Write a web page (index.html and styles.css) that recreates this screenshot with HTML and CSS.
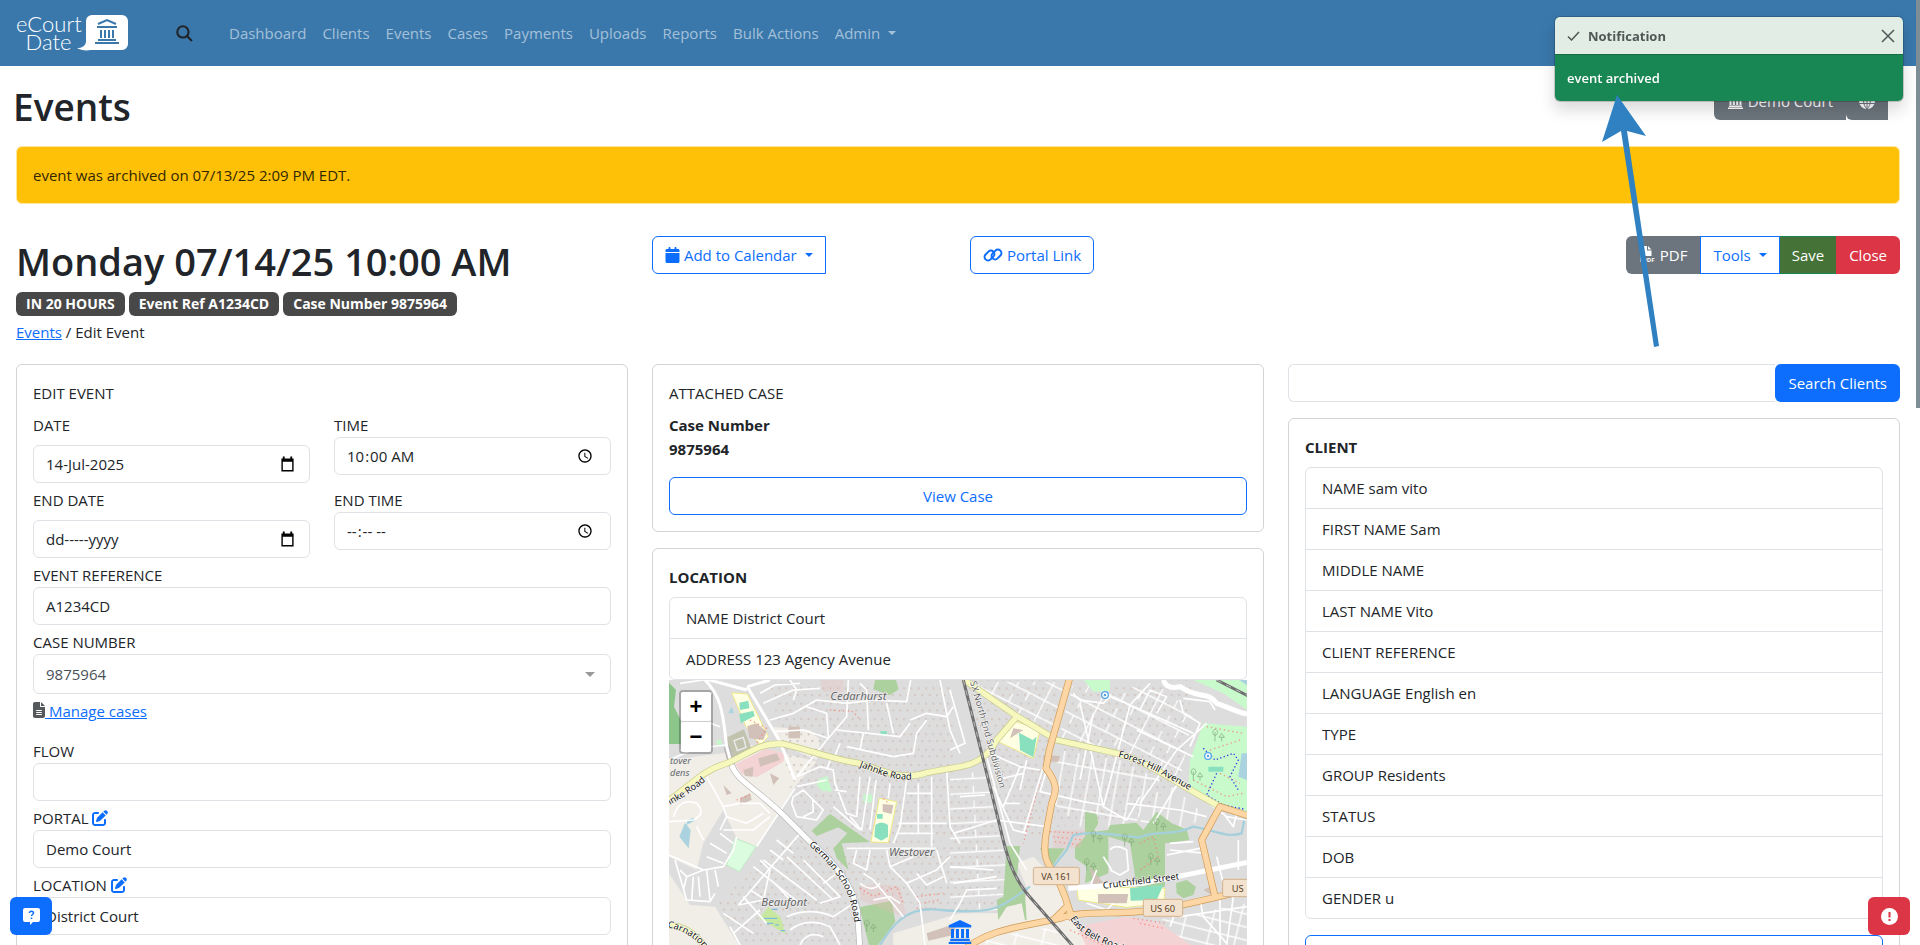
FILE: index.html
```html
<!DOCTYPE html>
<html lang="en">
<head>
  <meta charset="UTF-8">
  <title>Events - eCourtDate</title>
  <meta name="viewport" content="width=device-width, initial-scale=1.0">
  <link rel="stylesheet" href="styles.css">
</head>
<body>
  <!-- shared icons -->
  <svg class="defs" aria-hidden="true">
    <symbol id="i-court" viewBox="0 0 16 16"><path d="M8 0 15.500 3.500V5H.5V3.500zM2 6h2v6H2zm3.300 0h2v6h-2zm3.400 0h2v6h-2zM12 6h2v6h-2zM1.500 12.500h13V14h-13zM.5 14.500h15V16H.5z"/></symbol>
    <symbol id="i-edit" viewBox="0 0 512 512"><path d="M471.600 21.700c-21.900-21.900-57.300-21.900-79.200 0L362.300 51.700l97.900 97.900 30.100-30.100c21.900-21.900 21.900-57.300 0-79.200L471.600 21.700zm-299.200 220c-6.100 6.100-10.800 13.600-13.500 21.900l-29.600 88.800c-2.900 8.600-.6 18.100 5.800 24.600s15.900 8.700 24.600 5.800l88.800-29.600c8.200-2.700 15.700-7.400 21.900-13.500L437.700 172.300 339.700 74.300 172.400 241.700zM96 64C43 64 0 107 0 160V416c0 53 43 96 96 96H352c53 0 96-43 96-96V320c0-17.700-14.300-32-32-32s-32 14.300-32 32v96c0 17.700-14.300 32-32 32H96c-17.700 0-32-14.300-32-32V160c0-17.700 14.300-32 32-32h96c17.700 0 32-14.300 32-32s-14.300-32-32-32H96z"/></symbol>
    <symbol id="i-calendar" viewBox="0 0 448 512"><path d="M96 32V64H48C21.500 64 0 85.500 0 112v48H448V112c0-26.500-21.500-48-48-48H352V32c0-17.700-14.300-32-32-32s-32 14.300-32 32V64H160V32c0-17.700-14.300-32-32-32S96 14.300 96 32zM448 192H0V464c0 26.500 21.500 48 48 48H400c26.500 0 48-21.500 48-48V192z"/></symbol>
    <symbol id="i-picker" viewBox="0 0 16 16"><path d="M3 0h2v2h6V0h2v2h1.500v14h-13V2H3zM3 5.500v9h10v-9z" fill-rule="evenodd"/></symbol>
    <symbol id="i-file" viewBox="0 0 384 512"><path fill-rule="evenodd" d="M64 0C28.700 0 0 28.700 0 64V448c0 35.300 28.700 64 64 64H320c35.300 0 64-28.700 64-64V160H256c-17.700 0-32-14.300-32-32V0H64zM256 0V128H384L256 0zM112 256H272c8.800 0 16 7.200 16 16s-7.200 16-16 16H112c-8.800 0-16-7.200-16-16s7.200-16 16-16zm0 64H272c8.800 0 16 7.200 16 16s-7.200 16-16 16H112c-8.800 0-16-7.200-16-16s7.200-16 16-16zm0 64H272c8.800 0 16 7.200 16 16s-7.200 16-16 16H112c-8.800 0-16-7.200-16-16s7.200-16 16-16z"/></symbol>
  </svg>

  <div class="page">
    <nav class="navbar">
      <a class="brand" href="#">
        <span class="brand-name">eCourt<br>Date</span>
        <svg class="brand-mark" viewBox="0 0 51 36" aria-hidden="true">
          <path fill="#fff" d="M15 0H45a6 6 0 0 1 6 6V29a6 6 0 0 1-6 6H14C9 36 3 35 0 33c5 0 8-2 9-6V6a6 6 0 0 1 6-6z"/>
          <path fill="none" stroke="#3a78ac" stroke-width="2" d="M21 9 30 5l9 4M20 12h20M24 15v8M28 15v8M32 15v8M36 15v8M21 25h18M18 28h24"/>
        </svg>
      </a>
      <button class="nav-search" aria-label="Search">
        <svg viewBox="0 0 16 16" width="17" height="17"><circle cx="6.500" cy="6.500" r="5.300"/><path d="M10.500 10.500 15 15"/></svg>
      </button>
      <ul class="nav-links">
        <li><a href="#">Dashboard</a></li>
        <li><a href="#">Clients</a></li>
        <li><a href="#">Events</a></li>
        <li><a href="#">Cases</a></li>
        <li><a href="#">Payments</a></li>
        <li><a href="#">Uploads</a></li>
        <li><a href="#">Reports</a></li>
        <li><a href="#">Bulk Actions</a></li>
        <li><a class="caret" href="#">Admin</a></li>
      </ul>
    </nav>

    <header class="page-header">
      <h1>Events</h1>
      <div class="btn-group">
        <button class="btn btn-secondary"><svg class="icon" width="17" height="16"><use href="#i-court"/></svg> Demo Court</button>
        <button class="btn btn-secondary btn-globe" aria-label="Language">
          <svg width="16" height="16" viewBox="0 0 16 16"><circle cx="8" cy="8" r="8" fill="#fff"/><path d="M0 5.500h16M0 10.500h16M8 0v16M8 0C3.500 4 3.500 12 8 16M8 0c4.500 4 4.500 12 0 16" fill="none" stroke="#6c757d"/></svg>
        </button>
      </div>
    </header>

    <main class="content">
      <div class="alert">event was archived on 07/13/25 2:09 PM EDT.</div>

      <section class="columns title-row">
        <div>
          <h2>Monday 07/14/25 10:00 AM</h2>
          <div class="badges">
            <span class="badge">IN 20 HOURS</span>
            <span class="badge">Event Ref A1234CD</span>
            <span class="badge">Case Number 9875964</span>
          </div>
          <div class="breadcrumb"><a href="#">Events</a> / Edit Event</div>
        </div>
        <div class="links">
          <div><button class="btn btn-outline btn-open caret"><svg class="icon" width="15" height="16"><use href="#i-calendar"/></svg> Add to Calendar</button></div>
          <div><button class="btn btn-outline"><svg class="icon" width="20" height="16" viewBox="0 0 20 16"><g fill="none" stroke="#0d6efd" stroke-width="2"><rect x="1" y="5" width="11" height="7" rx="3.500" transform="rotate(-45 6.500 8.500)"/><rect x="8" y="4" width="11" height="7" rx="3.500" transform="rotate(-45 13.500 7.500)"/></g></svg> Portal Link</button></div>
        </div>
        <div class="btn-group actions">
          <button class="btn btn-secondary">
            <svg class="icon" width="17" height="17" viewBox="0 0 17 17"><path fill="#fff" d="M1.500 0H8v4.500h4.500V10h-9v6H1.500zM9 0l3.500 3.500H9z"/><text class="pdf-tag" x="4" y="16">PDF</text></svg>
            PDF</button>
          <button class="btn btn-outline caret">Tools</button>
          <button class="btn btn-save">Save</button>
          <button class="btn btn-danger">Close</button>
        </div>
      </section>

      <section class="columns">
        <form class="card">
          <p class="card-title">EDIT EVENT</p>
          <div class="pair">
            <div class="field field-date">
              <label for="date">DATE</label>
              <div class="picker">
                <input id="date" type="text" value="14-Jul-2025">
                <svg width="15" height="16"><use href="#i-picker"/></svg>
              </div>
            </div>
            <div class="field">
              <label for="time">TIME</label>
              <input id="time" type="time" value="10:00">
            </div>
            <div class="field field-date">
              <label for="end-date">END DATE</label>
              <div class="picker">
                <input id="end-date" type="text" value="dd-----yyyy">
                <svg width="15" height="16"><use href="#i-picker"/></svg>
              </div>
            </div>
            <div class="field">
              <label for="end-time">END TIME</label>
              <input id="end-time" type="time">
            </div>
          </div>
          <div class="field">
            <label for="reference">EVENT REFERENCE</label>
            <input id="reference" type="text" value="A1234CD">
          </div>
          <div class="field">
            <label for="case">CASE NUMBER</label>
            <div class="picker select">
              <select id="case"><option>9875964</option></select>
            </div>
          </div>
          <a class="manage" href="#"><svg width="12" height="16"><use href="#i-file"/></svg> Manage cases</a>
          <div class="field">
            <label for="flow">FLOW</label>
            <input id="flow" type="text">
          </div>
          <div class="field">
            <label for="portal">PORTAL <svg class="edit" width="16" height="16"><use href="#i-edit"/></svg></label>
            <input id="portal" type="text" value="Demo Court">
          </div>
          <div class="field">
            <label for="location">LOCATION <svg class="edit" width="16" height="16"><use href="#i-edit"/></svg></label>
            <input id="location" type="text" value="District Court">
          </div>
        </form>

        <div class="stack">
          <div class="card">
            <p class="card-title">ATTACHED CASE</p>
            <p class="case-number">Case Number<br>9875964</p>
            <button class="btn btn-outline btn-block">View Case</button>
          </div>
          <div class="card">
            <p class="card-title strong">LOCATION</p>
            <ul class="list">
              <li>NAME District Court</li>
              <li>ADDRESS 123 Agency Avenue</li>
            </ul>
            <div class="map">
              <div class="map-zoom">
                <button aria-label="Zoom in">+</button>
                <button aria-label="Zoom out">−</button>
              </div>
              <svg class="map-canvas" viewBox="27 30 1734 1200" preserveAspectRatio="xMinYMin slice">
                <defs>
                  <pattern id="houses" width="22" height="46" patternUnits="userSpaceOnUse"><path d="M3 6h6v6H3zM14 26h6v6h-6z" fill="#d2c8c1"/></pattern>
                  <pattern id="grid-ne" width="150" height="52" patternUnits="userSpaceOnUse" patternTransform="rotate(27)"><path d="M0 26H150M20 0V52M75 0V26M118 26V52" class="lane"/></pattern>
                  <pattern id="grid-mid" width="42" height="130" patternUnits="userSpaceOnUse" patternTransform="rotate(10)"><path d="M21 0V130M0 65H42" class="lane"/></pattern>
                  <pattern id="grid-w" width="220" height="44" patternUnits="userSpaceOnUse" patternTransform="rotate(-3)"><path d="M0 22H220M40 0V22" class="lane"/></pattern>
                  <pattern id="grid-s" width="80" height="38" patternUnits="userSpaceOnUse" patternTransform="rotate(14)"><path d="M0 19H80M30 0V38" class="lane"/></pattern>
                  <path id="p-jahnke" d="M598 290C650 308 700 338 775 326"/>
                  <path id="p-jahnke2" d="M0 420C60 390 100 365 150 322"/>
                  <path id="p-german" d="M446 526C520 590 566 650 580 735L588 790"/>
                  <path id="p-forest" d="M1374 260C1480 290 1520 325 1620 378"/>
                  <path id="p-rail" d="M930 36 1040 430"/>
                  <path id="p-belt" d="M1230 745C1260 800 1320 815 1400 850"/>
                  <path id="p-carn" d="M22 772C70 780 120 812 140 850"/>
                </defs>

                <!-- land use -->
                <rect x="27" y="30" width="1734" height="1200" fill="#dedddd"/>
                <path fill="#f1eee8" d="M27 270 190 250 270 225 470 275 405 350 290 530 230 505 190 420 130 520 110 600 27 560zM330 170 450 180 480 210 470 270 380 230zM27 610 90 705 165 710 240 830H27zM700 790 900 730 1010 730 1130 660 1180 600 1240 750 1330 820 1330 1230H690zM1070 580 1120 560 1190 630 1230 700 1120 700z"/>
                <path fill="url(#houses)" d="M330 40H880V500L700 560 560 480 400 400zM440 520 880 530V720L760 700 600 690zM170 700 430 460 600 700 600 830H260zM900 30H1200L1140 520 1020 420zM1240 40 1600 30 1560 330 1400 460 1180 470zM880 300 1010 420 1040 740 880 720z"/>
                <path fill="url(#grid-ne)" d="M930 36H1225L1190 180 1060 130zM1270 130 1240 40 1540 60 1600 130 1560 330 1380 250 1195 205 1240 40z"/>
                <path fill="url(#grid-mid)" d="M1195 240 1380 270 1500 330 1420 470 1260 470 1180 400zM1450 380 1540 350 1640 440 1560 480 1440 470z"/>
                <path fill="url(#grid-w)" d="M870 320 975 300 1020 500 1050 620 1010 740 870 700z"/>
                <path fill="url(#grid-s)" d="M1500 750 1761 700V1230H1540zM940 810 1180 770 1230 840V1230H900z"/>
                <path fill="#8cc68b" d="M27 38 48 60 42 110 62 150V222H27z"/>
                <path fill="#add19e" d="M645 30H708L716 58 690 76 640 58zM510 432 630 516 545 520 566 600 530 565 520 535 562 490 535 472 470 498 455 482zM598 712 695 692 706 755 650 830H628zM1275 425 1310 432 1315 460 1300 485 1345 480 1350 465 1430 458 1450 480 1490 425 1535 460 1580 478 1588 510 1515 520V650H1430L1410 520 1345 500V610L1275 640 1280 590 1245 565V530L1275 500zM1040 528H1080L1070 630 1095 670 1100 750H1095L1085 700 1040 710 1015 750 1010 690 1030 680zM1140 535H1215L1175 590zM1548 640 1580 630 1608 650 1600 675 1570 685 1550 670z"/>
                <path fill="#c8facc" d="M1272 30H1350V62L1300 65zM1600 30H1761V120L1690 70zM1630 160 1761 170V430L1680 410 1585 350 1590 270z"/>
                <path fill="#dcfce0" stroke="#bfeec4" stroke-width="3" d="M225 505 288 530 238 605 200 585z"/>
                <path fill="#c6f7cb" d="M475 328 502 318 516 365 485 362 470 345zM610 373H637V398H610zM168 212 182 208 187 224 172 226z"/>
                <path fill="#c8e8a0" d="M325 710 362 742 376 792 298 745z"/>
                <path fill="#ffffe4" stroke="#efe98a" stroke-width="3" d="M215 68 262 72 325 200 300 225 258 170zM658 385 710 395 685 518 633 516zM1055 150 1140 180 1120 265 1015 215zM1250 650 1515 655 1512 700 1400 712 1255 690z"/>
                <path fill="#88e0be" d="M238 98 265 92 268 115 240 120zM238 132 280 122 284 138 242 160zM660 184H682L680 196H664zM646 465Q665 450 684 465V500L664 512 643 500zM651 432H668V446H651zM1077 188 1118 210 1130 200 1120 262 1080 240zM1410 655 1450 650 1510 645 1490 690 1412 692zM1645 290H1690V305H1645z"/>
                <path fill="#c1c3ae" d="M195 205 252 178 276 240 215 262z"/>
                <path fill="none" stroke="#eee" stroke-width="4" d="M222 212 250 202 258 232 232 242z"/>
                <path fill="#f3d3d3" d="M225 283 318 236 375 250 370 275 290 322 245 312zM1250 770 1400 740 1500 760 1600 830H1280z"/>
                <path fill="#f0b8b8" opacity=".25" d="M1180 480H1280L1260 535H1180zM480 30H550V65H490zM600 650 650 640 720 650 740 740 700 730 600 690z"/>
                <path fill="#d2c1b8" d="M262 168 290 160 320 185 310 210 268 205zM295 265 350 250 360 270 300 290zM250 300 280 290 278 320 255 318zM330 310 358 325 340 345zM190 345 215 370 200 375zM240 385 270 370 275 390 240 405zM668 402 700 405 695 432 668 425zM1060 175 1090 180 1050 205zM1150 255 1200 258 1195 275H1150zM1314 672H1405L1400 700H1314zM1290 590 1330 640 1300 645zM1630 660 1650 650 1655 675zM385 170H420V205H385zM800 790 890 760 880 795 805 812z"/>
                <path fill="#aad3df" d="M75 458 92 480 86 535 58 500zM82 450 102 443 104 452 80 465zM205 130 215 110 222 130zM1745 250H1761V330L1735 320zM1738 30H1761V46z"/>
                <g fill="none" stroke="#fa8072" stroke-width="4" stroke-dasharray="4 9" opacity=".8">
                  <path d="M510 120 580 125 600 150M270 150 320 175 290 220M230 390 270 375M670 385 685 400M600 655 640 680 710 650 730 700M770 680 850 670M780 700 840 690M770 715 830 715M1170 485 1270 490M1180 500 1270 510M1185 515 1260 525M1140 330 1090 520M1440 520 1480 500 1495 560 1440 600M1640 170 1750 190M1650 240 1740 210M1600 330 1700 380 1750 370M1680 310 1740 340M1420 745 1520 760M1440 760 1510 775M1230 780 1330 825"/>
                </g>
                <path fill="none" stroke="#3b3be0" stroke-width="4" stroke-dasharray="4 7" d="M1630 235 1665 270 1720 250 1735 270 1710 320 1735 360M1670 310 1640 375 1690 405 1755 418"/>

                <!-- water -->
                <g fill="none" stroke="#a6cfdc" stroke-width="7">
                  <path d="M660 825C700 760 740 715 820 718 860 720 890 728 960 722 1010 720 1040 700 1110 650M1180 590 1220 540 1240 495C1310 480 1380 500 1440 502 1480 480 1540 500 1600 470 1660 480 1700 505 1745 490L1755 440"/>
                  <path stroke="#6db3e6" stroke-width="3" d="M335 718h18M312 745h40M318 760h22M345 765h12M362 782h14"/>
                </g>

                <!-- side streets -->
                <g class="street">
                  <path d="M60 40 130 30M130 110 160 60M100 140 180 170M27 270 120 230M60 240 200 225M300 70 345 45 420 40M310 100 400 60 480 55M330 150 400 130 470 90 560 100 640 90 740 95 752 30M340 185 430 180 505 205 560 140 565 30M505 205 410 320M390 30 410 60 400 90M440 110 500 130 505 200M530 180 720 200 750 160M600 40 620 60 625 180M680 100 700 190M750 150 800 130 860 140 880 110M840 30 870 180 900 250M560 230 700 260 760 250 770 190 800 150M540 220 520 270M610 190 600 240"/>
                  <path d="M410 320 480 290 520 300 525 340 560 430 590 440 600 320M410 350 500 330M405 355 290 530M400 380 430 360 490 420 470 450 410 440 395 400zM430 440 460 425 458 390M525 360 560 365M630 320 605 480 570 440M648 330 630 480M600 480 520 410M690 340 685 385M740 330 720 470 700 520M775 340V490M815 320V530M740 370H815M715 460H860M715 490H820M860 300 870 470 900 520"/>
                  <path d="M500 300 515 260M560 535H830M590 540 580 580 620 600 630 540M680 540 690 590 760 560M690 590 740 640 780 700 795 825M740 640 830 600 870 560M770 610 800 645 850 620M830 540 860 640M610 610 640 630 690 690 730 740M600 640Q640 670 660 640M640 690 690 680 720 700M870 750 900 700"/>
                  <path d="M40 440Q60 380 110 400 140 430 100 450L27 455M110 470 130 510M27 555 130 600 190 590 220 540 230 500M190 410 240 400 300 400 330 430M190 410 200 440 180 480M200 440 260 460 310 430M140 320 190 410M190 480 280 480 330 440"/>
                  <path d="M130 600 80 620 60 600M80 620 70 660M100 620 95 690M115 620 120 680M45 570 80 690 150 695 165 670M140 600 150 690M165 600 175 650M150 520 200 550M140 560 190 580M180 490 220 520"/>
                  <path d="M235 705 420 490M235 705 310 690 330 600 300 570M330 540 370 570M350 510 400 550M280 590 420 700M310 570 470 690M380 560 520 690M430 570 540 680 480 700M270 660 350 710M250 680 320 760M190 730 280 790M210 770 240 825M220 790 300 720M380 740Q450 710 520 740L580 700M390 780Q440 740 510 770L540 825M420 825Q440 780 490 800M345 640 400 700M490 640 530 610"/>
                  <path d="M870 60 915 220 870 240M900 380 975 375M980 260 1050 520 1100 600M990 250 1080 290 1140 300M1080 290 1030 410M1000 350 1060 480 1100 490M1030 400 1080 400M1150 290 1090 490M1100 270 1080 360M1010 330 1090 310M1160 300 1140 365 1270 395 1330 405M880 490 1010 450 1160 470"/>
                  <path d="M1240 70 1260 90 1330 100 1350 80 1410 105 1600 190M1300 130 1260 330M1410 105 1330 410 1400 450 1440 380M1260 100 1330 410M1560 90 1570 130 1620 160 1590 230M1570 85 1650 95 1665 120M1410 105 1470 40M1440 120 1470 60 1520 80 1490 130M1430 180 1600 260M1440 400 1550 240 1640 160M1480 460 1560 330M1400 400 1560 420 1640 440M1620 380 1700 440 1760 450M1690 430 1720 470 1730 430M1520 555 1620 535M1530 540 1640 550M1530 520 1600 515M1735 510V600"/>
                  <path d="M1350 540Q1365 520 1400 540L1405 600 1380 615 1350 600M1355 600 1330 560M1290 650 1310 600M1670 560 1690 640M1530 770 1545 730M1620 690 1630 740 1700 820M1680 690V825M1720 680 1700 825M900 700 920 660 1010 655M880 640 1010 620M870 590 1000 600M1560 740 1761 710M1280 700 1340 720 1360 700"/>
                </g>
                <path class="casing" d="M200 230 215 285C230 330 280 350 370 435L450 515C540 590 580 660 592 720L600 840"/>
                <path class="avenue" d="M130 25C190 80 190 150 200 230L215 285M262 50 360 215 405 330M262 50 330 30M130 25 260 60"/>
                <path class="avenue wide" d="M215 285C230 330 280 350 370 435L450 515C540 590 580 660 592 720L600 840"/>
                <path class="avenue wide" d="M1225 655 1450 640 1600 610 1761 577M1510 30Q1520 60 1560 50C1620 90 1640 60 1670 100 1700 110 1740 130 1761 132"/>

                <!-- main roads -->
                <g class="road-yellow">
                  <path id="yellow" d="M15 400C100 340 130 300 200 280 260 255 300 215 370 222 450 240 520 270 600 280 680 310 740 330 800 308L900 290C960 280 990 250 1010 210L1070 140M15 765C70 765 110 790 140 840M910 28 1070 138 1190 210 1370 250C1480 280 1520 325 1690 415"/>
                </g>
                <use href="#yellow" class="fill-yellow"/>
                <g class="road-orange">
                  <path id="orange" d="M1230 20 1168 240 1158 295C1200 350 1185 370 1175 400L1160 480C1145 560 1160 580 1190 620L1215 680 1238 750M900 850C980 775 1090 770 1200 745 1270 720 1350 735 1470 722 1570 708 1630 690 1780 655M1665 680 1625 510 1680 410 1780 442M1180 750 1225 705"/>
                </g>
                <use href="#orange" class="fill-orange"/>
                <path fill="none" stroke="#6f6f6f" stroke-width="9" d="M910 30 1020 470C1040 560 1060 620 1100 670L1240 830M1670 30 1765 78"/>
                <path fill="none" stroke="#bbb" stroke-width="3" stroke-dasharray="16 16" d="M910 30 1020 470C1040 560 1060 620 1100 670L1240 830M1670 30 1765 78"/>
                <g fill="#fff" stroke="#58a6e8" stroke-width="4"><circle cx="1335" cy="75" r="10"/><circle cx="1644" cy="258" r="10"/></g>
                <g fill="#58a6e8"><circle cx="1335" cy="75" r="4"/><circle cx="1644" cy="258" r="4"/></g>
                <g fill="none" stroke="#80a878" stroke-width="2">
                  <path id="tree" d="M1300 500a7 9 0 1 1 1 0zM1300 490v28M1312 506l8-12 8 12zM1320 506v12"/>
                  <use href="#tree" x="190" y="-36"/><use href="#tree" x="94" y="10"/><use href="#tree" x="172" y="68"/><use href="#tree" x="-20" y="84"/><use href="#tree" x="365" y="-304"/><use href="#tree" x="300" y="-186"/><use href="#tree" x="-680" y="268"/>
                </g>

                <!-- labels -->
                <g class="map-road">
                  <text><textPath href="#p-jahnke">Jahnke Road</textPath></text>
                  <text><textPath href="#p-jahnke2">Jahnke Road</textPath></text>
                  <text><textPath href="#p-german">German School Road</textPath></text>
                  <text><textPath href="#p-forest">Forest Hill Avenue</textPath></text>
                  <text><textPath href="#p-belt">East Belt Road</textPath></text>
                  <text><textPath href="#p-carn">Carnation</textPath></text>
                  <text transform="translate(1330 656) rotate(-7)">Crutchfield Street</text>
                </g>
                <text class="map-rail"><textPath href="#p-rail">SX North End Subdivision</textPath></text>
                <g class="map-place">
                  <text x="511" y="90">Cedarhurst</text>
                  <text x="687" y="557">Westover</text>
                  <text x="304" y="708">Beaufont</text>
                  <text class="small" x="30" y="281">tover</text>
                  <text class="small" x="30" y="317">dens</text>
                </g>
                <g class="shield">
                  <rect x="1120" y="592" width="138" height="52" rx="6"/><text x="1188" y="629">VA 161</text>
                  <rect x="1450" y="688" width="118" height="51" rx="6"/><text x="1508" y="725">US 60</text>
                  <rect x="1688" y="628" width="118" height="52" rx="6"/><text x="1733" y="665">US</text>
                </g>
                <use href="#i-court" x="864" y="750" width="72" height="72" fill="#0d6efd"/>
              </svg>
            </div>
          </div>
        </div>

        <div class="stack">
          <div class="search">
            <input type="text" aria-label="Search Clients">
            <button class="btn btn-primary">Search Clients</button>
          </div>
          <div class="card">
            <p class="card-title strong">CLIENT</p>
            <ul class="list">
              <li>NAME sam vito</li>
              <li>FIRST NAME Sam</li>
              <li>MIDDLE NAME</li>
              <li>LAST NAME Vito</li>
              <li>CLIENT REFERENCE</li>
              <li>LANGUAGE English en</li>
              <li>TYPE</li>
              <li>GROUP Residents</li>
              <li>STATUS</li>
              <li>DOB</li>
              <li>GENDER u</li>
            </ul>
            <button class="btn btn-outline btn-block view-client">View Client</button>
          </div>
        </div>
      </section>
    </main>
  </div>
  <div class="scroll-thumb"></div>

  <button class="corner corner-left" aria-label="Help">
    <svg width="17" height="17" viewBox="0 0 17 17"><path fill="#fff" d="M2 0h13a2 2 0 0 1 2 2v10a2 2 0 0 1-2 2h-5l-3 3v-3H2a2 2 0 0 1-2-2V2a2 2 0 0 1 2-2z"/><path fill="none" stroke="#0d6efd" stroke-width="1.500" d="M6.500 5c0-2.500 4-2.500 4 0 0 1.500-2 1.500-2 3M8.500 9.500V11"/></svg>
  </button>
  <button class="corner corner-right" aria-label="Report a problem">
    <svg width="17" height="17" viewBox="0 0 17 17"><circle cx="8.500" cy="8.500" r="8.500" fill="#fff"/><path stroke="#dc3545" stroke-width="2" d="M8.500 4v5.500M8.500 11v2"/></svg>
  </button>

  <div class="toast" role="status">
    <div class="toast-header">
      <svg width="13" height="10" viewBox="0 0 13 10"><path d="M1 5.500 4.500 9 12 1"/></svg>
      <strong>Notification</strong>
      <button aria-label="Close notification"><svg width="14" height="14" viewBox="0 0 14 14"><path d="M1 1l12 12M13 1 1 13"/></svg></button>
    </div>
    <div class="toast-body">event archived</div>
  </div>

  <svg class="pointer" width="58" height="252" viewBox="0 0 58 252" aria-hidden="true"><path d="M15 0 44 41 25 36 57 251 52 252 19 36 0 47z"/></svg>
</body>
</html>
```
FILE: styles.css
```css
* {
  box-sizing: border-box;
}
body {
  margin: 0;
  color: #212529;
  background-color: #fff;
  font-family: "Open Sans", "Segoe UI", "Noto Sans", sans-serif;
  font-size: 15px;
  line-height: 24px;
}
h1, h2, p, ul {
  margin: 0;
  padding: 0;
}
h1, h2 {
  font-size: 38px;
  font-weight: 600;
  line-height: 50px;
}
h1 {
  font-size: 37px;
}
ul {
  list-style: none;
}
a {
  color: #0d6efd;
}
button, input, select {
  font: inherit;
  color: inherit;
}
button {
  cursor: pointer;
}
.defs {
  position: absolute;
  width: 0;
  height: 0;
}
.page {
  height: 100vh;
  padding-right: 4px;
  overflow-y: auto;
  scrollbar-width: none;
  background: linear-gradient(#3a78ac, #3a78ac) right top / 4px 66px no-repeat;
}
.scroll-thumb {
  position: fixed;
  top: 0;
  right: 0;
  width: 4px;
  height: 408px;
  background-color: #7e8d96;
}

/* navbar */
.navbar {
  display: flex;
  align-items: center;
  height: 66px;
  padding-left: 16px;
  background-color: #3a78ac;
}
.brand {
  display: flex;
  align-items: center;
  color: #fff;
  text-decoration: none;
}
.brand-name {
  width: 65px;
  font-family: Lato, "Liberation Sans", sans-serif;
  font-size: 22px;
  font-weight: 300;
  line-height: 18px;
  text-align: center;
}
.brand-mark {
  width: 51px;
  height: 36px;
  margin-left: -4px;
}
.nav-search {
  display: flex;
  margin: 0 28px 0 48px;
  padding: 0;
  border: 0;
  background: none;
}
.nav-search svg {
  fill: none;
  stroke: #212529;
  stroke-width: 2;
}
.nav-links {
  display: flex;
}
.nav-links a {
  padding: 8px;
  color: rgba(255, 255, 255, .55);
  text-decoration: none;
}
.caret::after {
  content: "";
  display: inline-block;
  margin-left: 8px;
  vertical-align: 4px;
  border: 4px solid transparent;
  border-top-color: currentColor;
  border-bottom: 0;
}

/* buttons */
.btn {
  height: 38px;
  padding: 0 12px;
  border: 1px solid transparent;
  border-radius: 6px;
  white-space: nowrap;
}
.icon {
  vertical-align: -2px;
  fill: currentColor;
}
.btn-primary {
  color: #fff;
  background-color: #0d6efd;
}
.btn-secondary {
  color: #fff;
  background-color: #6c757d;
}
.btn-outline {
  color: #0d6efd;
  background-color: #fff;
  border-color: #0d6efd;
}
.btn-save {
  color: #fff;
  background-color: #457236;
  border-color: #198754;
  border-left: 0;
  border-right: 0;
}
.btn-danger {
  color: #fff;
  background-color: #dc3545;
}
.btn-open {
  border-radius: 6px 0 0 6px;
}
.btn-block {
  display: block;
  width: 100%;
}
.btn-group {
  display: flex;
}
.btn-group .btn {
  border-radius: 0;
}
.btn-group .btn:first-child {
  border-radius: 6px 0 0 6px;
}
.btn-group .btn:last-child {
  border-radius: 0 6px 6px 0;
}
.btn-group .btn-globe:last-child {
  border-radius: 6px 0 0 6px;
}
.btn-globe svg {
  display: block;
}
.actions {
  justify-content: flex-end;
}
.pdf-tag {
  font-size: 6px;
  font-weight: 700;
  fill: #fff;
}

/* page head */
.page-header {
  display: flex;
  justify-content: space-between;
  padding: 16px 28px 14px 13px;
}
.content {
  padding: 0 16px;
}
.alert {
  padding: 16px;
  color: #332701;
  background-color: #ffc107;
  border: 1px solid #ffe69c;
  border-radius: 6px;
}
.columns {
  display: grid;
  grid-template-columns: repeat(3, minmax(0, 1fr));
  gap: 24px;
  align-items: start;
}
.title-row {
  margin: 32px 0 20px;
}
.links {
  display: grid;
  grid-template-columns: 1fr 1fr;
  gap: 24px;
}
.badges {
  display: flex;
  gap: 4px;
  margin: 6px 0 4px;
}
.badge {
  padding: 0 10px;
  border-radius: 6px;
  color: #fff;
  background-color: #484848;
  font-size: 14px;
  font-weight: 700;
}

/* cards */
.stack {
  display: flex;
  flex-direction: column;
  gap: 16px;
}
.card {
  padding: 16px;
  border: 1px solid #d3d4d5;
  border-radius: 6px;
}
.card-title {
  margin-bottom: 8px;
}
.strong, .case-number {
  font-weight: 700;
}
.case-number {
  margin-bottom: 16px;
}
.list {
  border: 1px solid #dee2e6;
  border-radius: 6px;
}
.list li {
  padding: 8px 16px;
}
.list li + li {
  border-top: 1px solid #dee2e6;
}
.view-client {
  margin-top: 16px;
}

/* form */
.pair {
  display: grid;
  grid-template-columns: 1fr 1fr;
  column-gap: 24px;
  align-items: start;
}
.field {
  margin-bottom: 5px;
}
.field label {
  display: block;
}
.field-date label {
  margin-bottom: 8px;
}
input, select {
  display: block;
  width: 100%;
  height: 38px;
  padding: 0 12px;
  border: 1px solid #dee2e6;
  border-radius: 6px;
  background-color: #fff;
}
input[type="time"] {
  padding: 0 14px 0 11px;
}
.picker {
  position: relative;
}
.picker svg {
  position: absolute;
  top: 11px;
  right: 15px;
}
.select select {
  height: 40px;
  color: #495057;
  appearance: none;
}
.select::after {
  content: "";
  position: absolute;
  top: 18px;
  right: 16px;
  border: 5px solid transparent;
  border-top-color: #999;
  border-bottom: 0;
}
.manage {
  display: inline-block;
  margin-bottom: 16px;
}
.manage svg {
  fill: #55595c;
  vertical-align: -1px;
}
.edit {
  fill: #0d6efd;
  vertical-align: -2px;
}
.search {
  display: flex;
}
.search input {
  flex: 1;
  border-right: 0;
  border-radius: 6px 0 0 6px;
}

/* map */
.map {
  position: relative;
  height: 400px;
}
.map-canvas {
  display: block;
  width: 100%;
  height: 100%;
  font-family: "Noto Sans", sans-serif;
}
.map-zoom {
  position: absolute;
  top: 10px;
  left: 10px;
  display: flex;
  flex-direction: column;
  border: 2px solid rgba(0, 0, 0, .25);
  border-radius: 4px;
}
.map-zoom button {
  width: 30px;
  height: 30px;
  padding: 0;
  border: 0;
  border-radius: 2px;
  color: #000;
  background-color: #fff;
  font-family: "Liberation Sans", Arial, sans-serif;
  font-size: 22px;
  font-weight: 700;
}
.map-zoom button:first-child {
  border-bottom: 1px solid #ccc;
}
.lane {
  fill: none;
  stroke: #fff;
  stroke-width: 4;
}
.street {
  fill: none;
  stroke: #fff;
  stroke-width: 5;
  stroke-linejoin: round;
}
.casing {
  fill: none;
  stroke: #b8b8b8;
  stroke-width: 19;
}
.avenue {
  fill: none;
  stroke: #fff;
  stroke-width: 9;
}
.wide {
  stroke-width: 15;
}
.road-yellow, .fill-yellow, .road-orange, .fill-orange {
  fill: none;
}
.road-yellow {
  stroke: #c5c98a;
  stroke-width: 20;
}
.road-orange {
  stroke: #cf9a55;
  stroke-width: 21;
}
#yellow, #orange {
  stroke-linejoin: round;
}
.fill-yellow {
  stroke: #f6f8bd;
  stroke-width: 16;
}
.fill-orange {
  stroke: #fcd6a4;
  stroke-width: 17;
}
.map-road, .map-rail {
  font-size: 28px;
  fill: #111;
  stroke: #fff;
  stroke-width: 3;
  paint-order: stroke;
}
.map-rail {
  fill: #666;
}
.map-place {
  font-size: 34px;
  font-style: italic;
  fill: #666;
  stroke: #eee;
  stroke-width: 4;
  paint-order: stroke;
}
.map-place .small {
  font-size: 28px;
}
.shield {
  font-size: 28px;
  text-anchor: middle;
}
.shield rect {
  fill: #f3e3ce;
  stroke: #d4b18a;
  stroke-width: 3;
}
.shield text {
  fill: #5c432a;
}

/* floating parts */
.corner {
  position: fixed;
  bottom: 10px;
  display: flex;
  align-items: center;
  justify-content: center;
  width: 42px;
  height: 38px;
  padding: 0;
  border: 0;
  border-radius: 6px;
}
.corner-left {
  left: 10px;
  background-color: #0d6efd;
}
.corner-right {
  right: 10px;
  background-color: #dc3545;
}
.toast {
  position: fixed;
  top: 16px;
  right: 16px;
  width: 350px;
  border: 1px solid rgba(0, 0, 0, .18);
  border-radius: 6px;
  overflow: hidden;
  color: #fff;
  background-color: #198754;
  background-clip: padding-box;
  box-shadow: 0 8px 16px rgba(0, 0, 0, .15);
  font-size: 13px;
}
.toast-header {
  display: flex;
  align-items: center;
  gap: 8px;
  height: 38px;
  padding: 0 8px 0 12px;
  color: #4f5856;
  background-color: #e2ede5;
  border-bottom: 1px solid #146c43;
}
.toast-header svg {
  fill: none;
  stroke: #4f5856;
  stroke-width: 1.5;
}
.toast-header button {
  display: flex;
  margin-left: auto;
  padding: 0;
  border: 0;
  background: none;
}
.toast-body {
  padding: 11px 12px;
  font-weight: 600;
}
.pointer {
  position: absolute;
  top: 95px;
  right: 260px;
  fill: #2f81c2;
}
```
